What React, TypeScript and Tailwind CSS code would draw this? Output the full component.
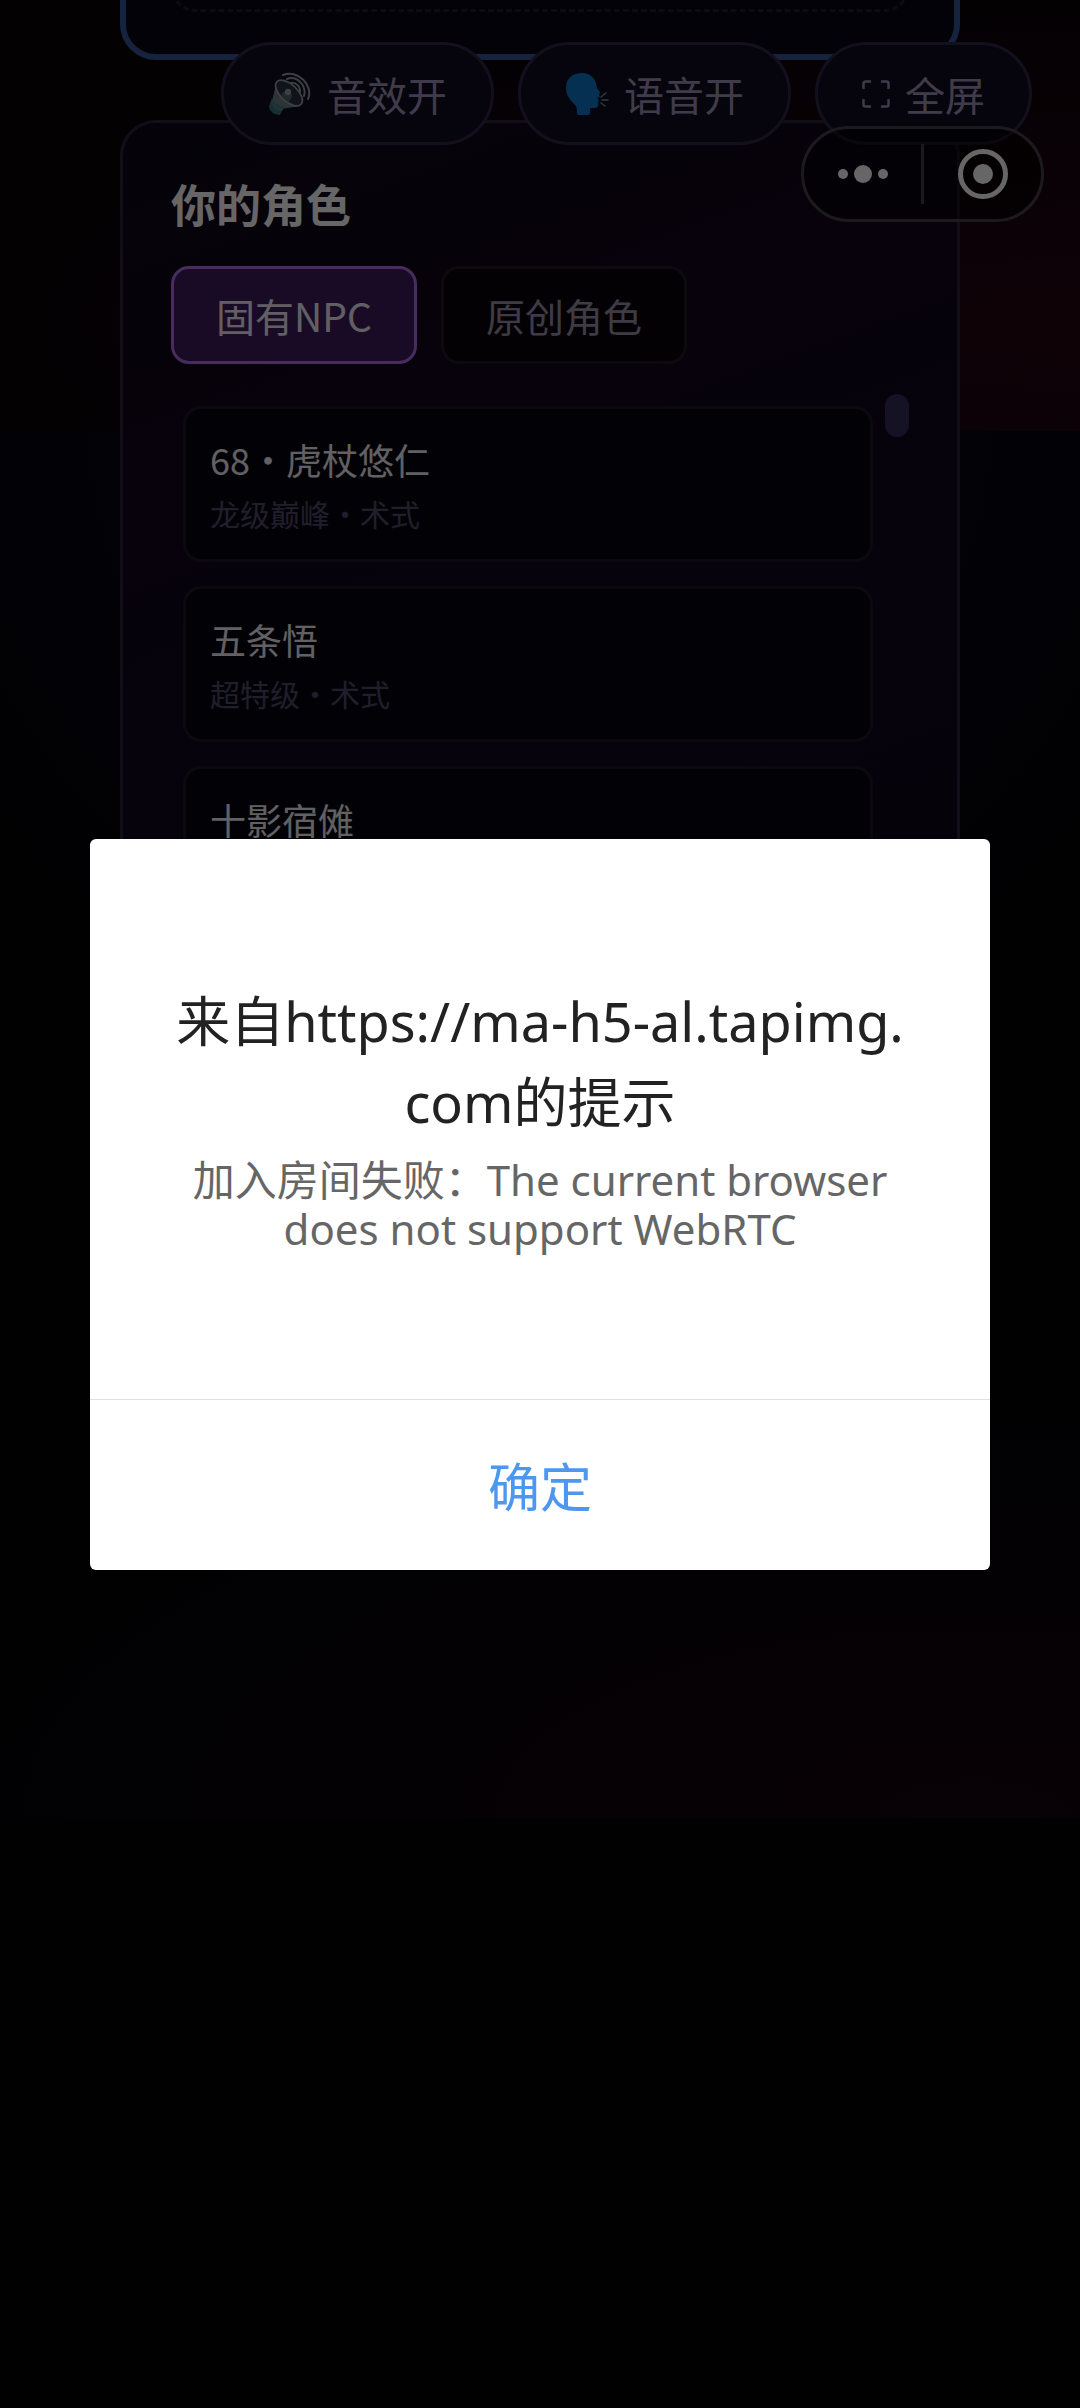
import { useState } from 'react';
import type { ReactNode } from 'react';
import clsx from 'clsx';

interface Role {
  name: string;
  tag: string;
}

const ROLES: Role[] = [
  { name: '68・虎杖悠仁', tag: '龙级巅峰・术式' },
  { name: '五条悟', tag: '超特级・术式' },
  { name: '十影宿傩', tag: '' },
];

const TABS = ['固有NPC', '原创角色'];

function SpeakerIcon() {
  return (
    <svg width="44" height="44" viewBox="0 0 44 44" fill="none" aria-hidden="true">
      <path d="M9 9c-2 8-4 15-5 20l9 8c6-1 13-2 19-3z" fill="#6d858c" />
      <path d="M4 26 1 34c0 5 5 9 11 9l4-8c-6-1-11-4-12-9z" fill="#3d727c" />
      <path d="m4 27-1 4c2 5 6 8 11 8l2-3c-6-1-10-4-12-9z" fill="#568089" />
      <ellipse cx="21" cy="21" rx="8.500" ry="16.500" transform="rotate(-47 21 21)" fill="#28323c" stroke="#98a3a8" strokeWidth="1.800" />
      <path d="M13 22c2-2 6-4 9-3l2 4c0 3-2 6-4 7-3-2-6-5-7-8z" fill="#53656d" />
      <circle cx="20" cy="20" r="3.200" fill="#93a0a6" />
      <path d="M23 11c5-1 10 4 9 9M19 7C28 3 39 13 36 24M15 3c14-6 31 10 25 24" stroke="#9a9da6" strokeWidth="2" strokeLinecap="round" />
    </svg>
  );
}

function VoiceIcon() {
  return (
    <svg width="44" height="44" viewBox="0 0 44 44" fill="none" aria-hidden="true">
      <path
        d="M17 1C7 1 1 7 1 16c0 7 4 12 9 17 2 2 2 4 2 8 0 1 1 2 2 2h9c1 0 2-1 2-2v-4c0-1 1-1 2-1h3c2 0 3-1 3-3v-3l1-2-2-2 3-1-1-2 1-3-3-4C31 7 26 1 17 1z"
        fill="#0f78cc"
      />
      <path d="m36 25 5-4M37 28h6M36 31l4 3" stroke="#7b93a6" strokeWidth="1.500" strokeLinecap="round" />
    </svg>
  );
}

function FullscreenIcon() {
  return (
    <svg width="28" height="28" viewBox="0 0 28 28" fill="none" stroke="currentColor" strokeWidth="2.500" aria-hidden="true">
      <path d="M9 1.500H3.500a2 2 0 0 0-2 2V9M19 1.500h5.500a2 2 0 0 1 2 2V9M26.500 19v5.500a2 2 0 0 1-2 2H19M9 26.500H3.500a2 2 0 0 1-2-2V19" />
    </svg>
  );
}

function Pill({ icon, label }: { icon: ReactNode; label: string }) {
  return (
    <button className="flex h-[103px] items-center gap-[15px] rounded-full border-[3px] border-[#32264a] bg-[#0f0a20] px-11 text-[40px] text-[#a093b8]">
      {icon}
      {label}
    </button>
  );
}

function RoleCard({ role }: { role: Role }) {
  return (
    <li>
      <button className="block w-full rounded-[18px] border-[3px] border-[#1c1726] bg-[#070411] p-6 text-left">
        <span className="block text-[36px] leading-[52px] text-[#f2f0f5]">{role.name}</span>
        <span className="mt-1.5 block min-h-[44px] text-[30px] leading-[44px] text-[#544c6e]">{role.tag}</span>
      </button>
    </li>
  );
}

/* Mini-app capsule: menu dots and close ring */
function Capsule() {
  return (
    <div className="absolute top-[126px] right-9 flex h-24 w-[243px] items-center rounded-full border-[3px] border-[#47434a] bg-black/50">
      <button aria-label="更多" className="flex flex-1 items-center justify-center gap-1.5">
        <i className="size-2.5 rounded-full bg-white" />
        <i className="size-[18px] rounded-full bg-white" />
        <i className="size-2.5 rounded-full bg-white" />
      </button>
      <span className="h-[60px] w-[3px] bg-[#47434a]" />
      <button aria-label="关闭" className="flex flex-1 items-center justify-center">
        <span className="flex size-[50px] items-center justify-center rounded-full border-[5px] border-white">
          <i className="size-5 rounded-full bg-white" />
        </span>
      </button>
    </div>
  );
}

export default function App() {
  const [tab, setTab] = useState(TABS[0]);
  const [open, setOpen] = useState(true);

  return (
    <div className="relative h-screen overflow-hidden bg-[#030307] bg-[image:radial-gradient(ellipse_at_100%_75%,#260513_0%,#0a0309_70%),radial-gradient(ellipse_at_50%_0%,#0f0a26_0%,transparent_90%),radial-gradient(ellipse_at_90%_100%,#15040e_0%,transparent_75%)] [background-position:0_0,0_431px,0_1431px] [background-size:100%_431px,100%_500px,100%_387px] bg-no-repeat font-['Noto_Sans_CJK_SC',sans-serif]">
      <main className="mx-[120px] flex flex-col gap-[60px]">
        <section className="-mt-12 rounded-[36px] border-[6px] border-[#38599f] bg-[#0c0717] px-[45px] pb-[42px]">
          <div className="h-[54px] rounded-[24px] border-[3px] border-dashed border-[#231d2a] border-t-0" />
        </section>

        <section className="flex flex-col gap-[30px] rounded-[36px] border-[3px] border-[#2f2340] bg-[linear-gradient(160deg,#0d0818_0%,#13071c_30%,#0f081e_60%,#0d0719_100%)] p-12">
          <h2 className="text-[45px] leading-[65px] font-bold text-white">你的角色</h2>

          <div className="flex gap-6">
            {TABS.map((t) => (
              <button
                key={t}
                onClick={() => setTab(t)}
                className={clsx(
                  'h-[98px] w-[246px] rounded-[18px] border-[3px] text-[39px]',
                  t === tab ? 'border-[#b46ff0] bg-[#401c5e] text-[#f5eefa]' : 'border-[#221a26] bg-[#08040c] text-[#9d95ae]',
                )}
              >
                {t}
              </button>
            ))}
          </div>

          <div className="flex h-[540px] overflow-hidden">
            <ul className="flex flex-1 flex-col gap-6 p-3">
              {ROLES.map((r) => (
                <RoleCard key={r.name} role={r} />
              ))}
            </ul>
            <div className="w-6">
              <div className="h-[43px] rounded-full bg-[#352d60]" />
            </div>
          </div>
        </section>
      </main>

      <div className="absolute top-[42px] right-12 flex gap-6">
        <Pill icon={<SpeakerIcon />} label="音效开" />
        <Pill icon={<VoiceIcon />} label="语音开" />
        <Pill icon={<FullscreenIcon />} label="全屏" />
      </div>

      <Capsule />

      {/* Alert */}
      {open && (
        <div className="absolute inset-0 flex items-center bg-black/60 px-[90px]">
          <div role="alertdialog" aria-labelledby="alert-title" className="w-full rounded-[6px] bg-white text-center font-['Noto_Sans','Noto_Sans_CJK_SC',sans-serif]">
            <div className="px-[84px] pt-[142px] pb-[146px]">
              <h1 id="alert-title" className="text-[54px] leading-[81px] break-all text-[#222222]">
                来自https://ma-h5-al.tapimg.com的提示
              </h1>
              <p className="mt-3 text-[42px] leading-[49px] text-[#666666]">
                加入房间失败：The current browser does not support WebRTC
              </p>
            </div>
            <button onClick={() => setOpen(false)} className="h-[171px] w-full border-t border-[#e2e2e2] pt-1 text-[52px] text-[#4d98ee]">
              确定
            </button>
          </div>
        </div>
      )}
    </div>
  );
}
